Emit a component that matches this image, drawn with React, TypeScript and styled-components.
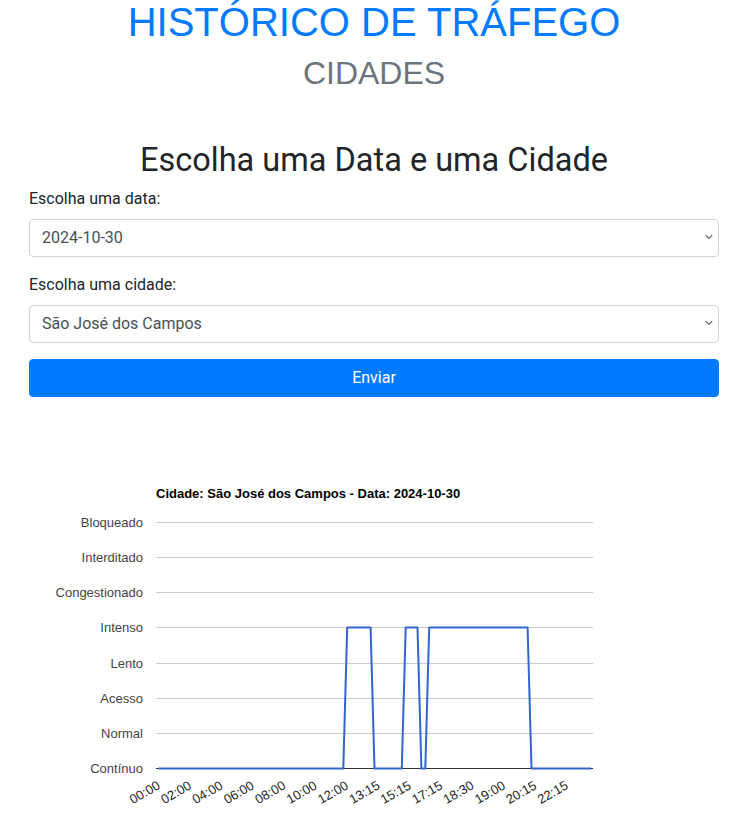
import React from "react";
import styled, { createGlobalStyle } from "styled-components";

const GlobalStyle = createGlobalStyle`
  html, body {
    margin: 0;
    padding: 0;
    background: #fff;
  }
  body {
    font-family: Roboto, "Liberation Sans", Arial, sans-serif;
    font-size: 16px;
    line-height: 1.5;
    color: #212529;
  }
  * { box-sizing: border-box; }
`;

const Page = styled.div`
  width: 690px;
  margin: 0 auto 0 29px;
`;

const Header = styled.header`
  text-align: center;
  margin-bottom: 49px;
`;

const Title = styled.h1`
  margin: 0 0 10px;
  font-family: "Liberation Sans", Arial, sans-serif;
  font-weight: 400;
  font-size: 40px;
  line-height: 44px;
  color: #007bff;
`;

const Subtitle = styled.h2`
  margin: 0;
  font-family: "Liberation Sans", Arial, sans-serif;
  font-weight: 400;
  font-size: 32px;
  line-height: 38px;
  color: #6c757d;
`;

const Form = styled.form`
  display: flex;
  flex-direction: column;
`;

const FormHeading = styled.h3`
  margin: 0 0 8px;
  text-align: center;
  font-family: Roboto, sans-serif;
  font-weight: 400;
  font-size: 32.5px;
  line-height: 38px;
  color: #212529;
`;

const Field = styled.div`
  display: flex;
  flex-direction: column;
  margin-bottom: 16px;
`;

const Label = styled.label`
  display: block;
  margin-bottom: 8px;
  font-size: 16px;
  line-height: 24px;
  color: #212529;
`;

const SelectBox = styled.div`
  position: relative;
`;

const Select = styled.select`
  display: block;
  width: 100%;
  height: 38px;
  padding: 6px 28px 6px 12px;
  font-family: Roboto, sans-serif;
  font-size: 16px;
  line-height: 24px;
  color: #495057;
  background: #fff;
  border: 1px solid #ced4da;
  border-radius: 4px;
  outline: none;
  appearance: none;
  -webkit-appearance: none;
`;

const Chevron = styled.svg`
  position: absolute;
  right: 6px;
  top: 15px;
  width: 8px;
  height: 6px;
  pointer-events: none;
`;

const SubmitButton = styled.button`
  display: block;
  width: 100%;
  height: 38px;
  padding: 6px 12px;
  font-family: Roboto, sans-serif;
  font-size: 16px;
  line-height: 24px;
  color: #fff;
  background: #007bff;
  border: 1px solid #007bff;
  border-radius: 4px;
  cursor: pointer;
`;

const ChartWrap = styled.section`
  margin-top: 43px;
  height: 372px;
`;

const ChartSvg = styled.svg`
  display: block;
  width: 690px;
  height: 372px;
  font-family: "Liberation Sans", Arial, sans-serif;
`;

const CITY = "São José dos Campos";
const DATE = "2024-10-30";

const levels = [
  "Bloqueado",
  "Interditado",
  "Congestionado",
  "Intenso",
  "Lento",
  "Acesso",
  "Normal",
  "Contínuo",
];

const CHART_LEFT = 156;
const CHART_RIGHT = 593;
const TOP_Y = 522;
const STEP = (768 - 522) / 7;
const levelY = (i: number) => Math.round(TOP_Y + i * STEP);

const xLabels = [
  "00:00", "02:00", "04:00", "06:00", "08:00", "10:00", "12:00",
  "13:15", "15:15", "17:15", "18:30", "19:00", "20:15", "22:15",
];

// [x, level index] — 7 = Contínuo, 3 = Intenso
const series: [number, number][] = [
  [158.3, 7], [343.3, 7], [347.2, 3], [370.6, 3], [374.5, 7],
  [401.8, 7], [405.7, 3], [417.5, 3], [421.4, 7], [425.3, 7],
  [429.2, 3], [527.6, 3], [531.5, 7], [591, 7],
];

function SelectField({
  id,
  label,
  value,
  options,
}: {
  id: string;
  label: string;
  value: string;
  options: string[];
}) {
  return (
    <Field>
      <Label htmlFor={id}>{label}</Label>
      <SelectBox>
        <Select id={id} defaultValue={value}>
          {options.map((o) => (
            <option key={o} value={o}>
              {o}
            </option>
          ))}
        </Select>
        <Chevron viewBox="0 0 8 6" aria-hidden="true">
          <path d="M0.8 1.2 L4 4.4 L7.2 1.2" fill="none" stroke="#5f6368" strokeWidth={1.2} />
        </Chevron>
      </SelectBox>
    </Field>
  );
}

function TrafficChart() {
  const points = series
    .map(([x, l]) => `${x},${levelY(l) + 0.5}`)
    .join(" ");
  return (
    <ChartSvg viewBox="29 440 690 372">
      <text x={CHART_LEFT} y={498} fontSize={13} fontWeight={700} fill="#000">
        {`Cidade: ${CITY} - Data: ${DATE}`}
      </text>
      {levels.map((name, i) => (
        <g key={name}>
          <rect
            x={CHART_LEFT}
            y={levelY(i)}
            width={CHART_RIGHT - CHART_LEFT}
            height={1}
            fill={i === levels.length - 1 ? "#333" : "#ccc"}
          />
          <text
            x={143}
            y={levelY(i) + 4.8}
            fontSize={13}
            fill="#444"
            textAnchor="end"
          >
            {name}
          </text>
        </g>
      ))}
      <polyline
        points={points}
        fill="none"
        stroke="#3366cc"
        strokeWidth={2}
        strokeLinejoin="round"
      />
      {xLabels.map((t, k) => {
        const x = 161 + k * 31.38;
        const y = 788;
        return (
          <text
            key={t}
            x={x}
            y={y}
            fontSize={13}
            fill="#222"
            textAnchor="end"
            transform={`rotate(-30 ${x} ${y})`}
          >
            {t}
          </text>
        );
      })}
    </ChartSvg>
  );
}

export default function App() {
  return (
    <Page>
      <GlobalStyle />
      <Header>
        <Title>HISTÓRICO DE TRÁFEGO</Title>
        <Subtitle>CIDADES</Subtitle>
      </Header>
      <Form onSubmit={(e) => e.preventDefault()}>
        <FormHeading>Escolha uma Data e uma Cidade</FormHeading>
        <SelectField
          id="data"
          label="Escolha uma data:"
          value={DATE}
          options={["2024-10-30", "2024-10-29"]}
        />
        <SelectField
          id="cidade"
          label="Escolha uma cidade:"
          value={CITY}
          options={[CITY, "Campinas"]}
        />
        <SubmitButton type="submit">Enviar</SubmitButton>
      </Form>
      <ChartWrap>
        <TrafficChart />
      </ChartWrap>
    </Page>
  );
}
